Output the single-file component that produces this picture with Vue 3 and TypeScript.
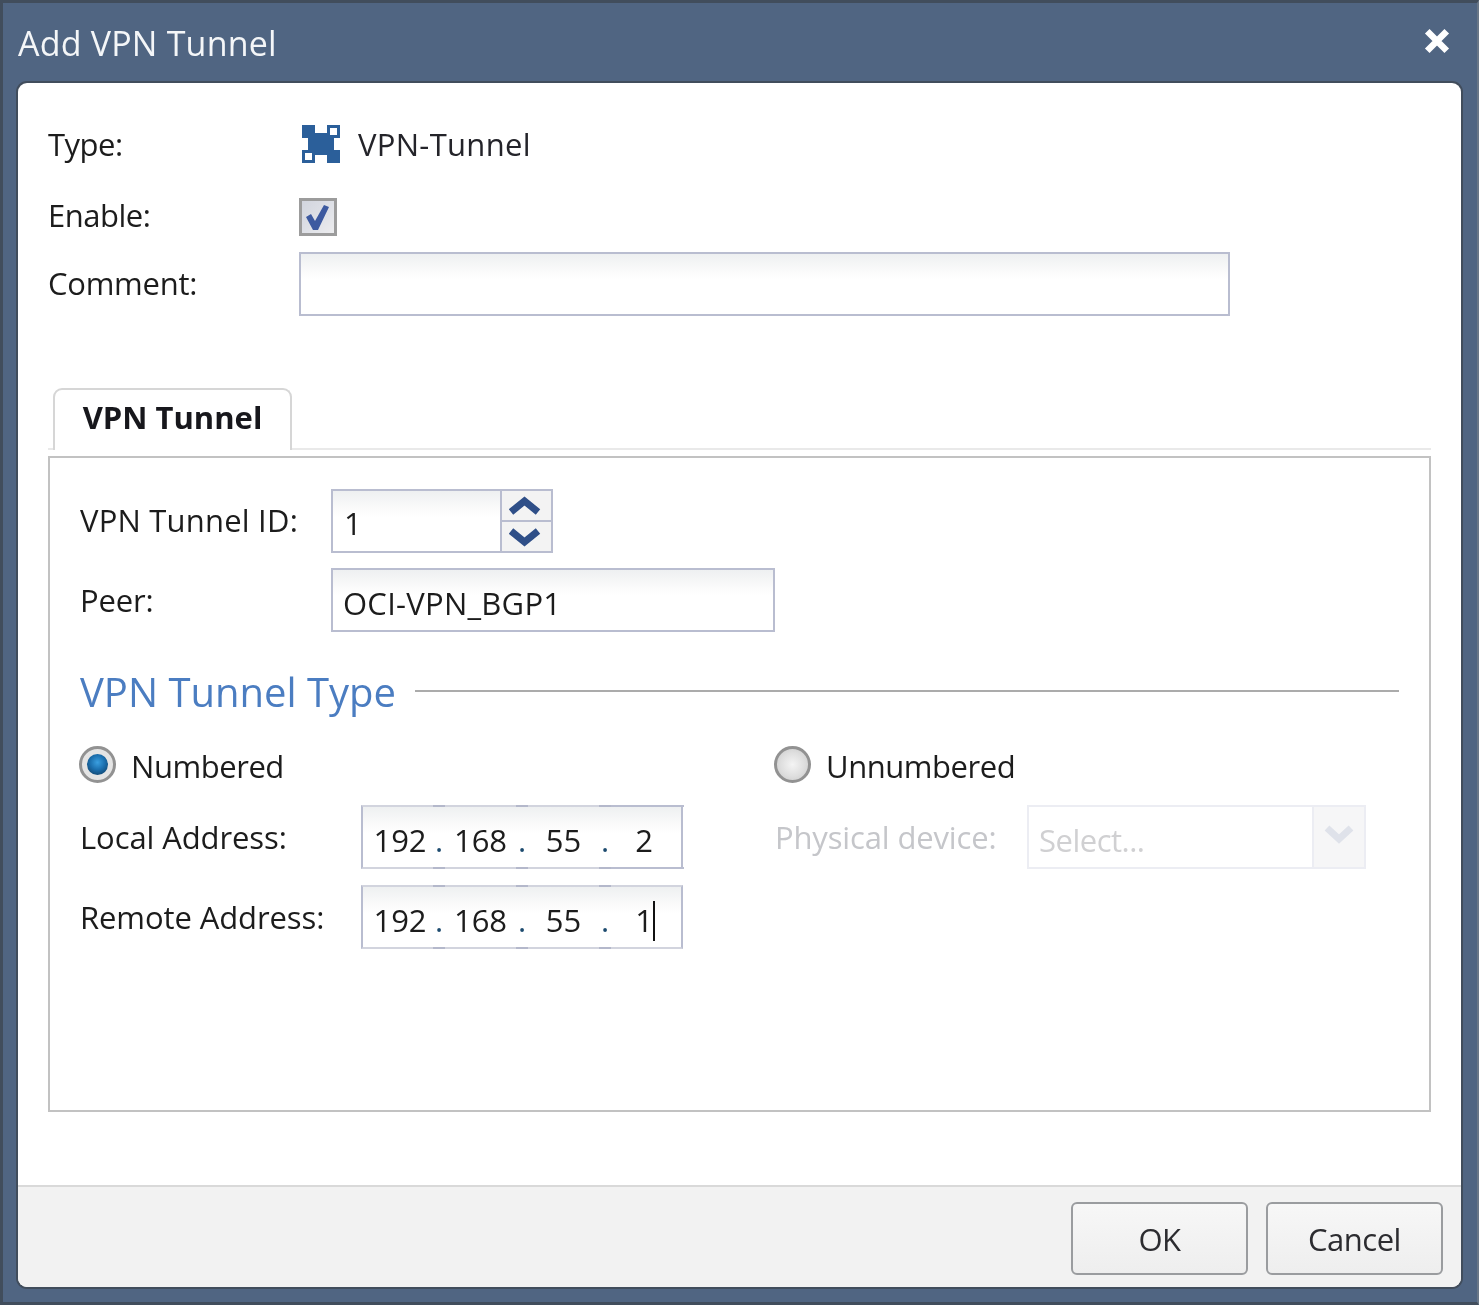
<script setup lang="ts">
const addresses: { label: string; octets: string[]; caret: boolean; active: boolean }[] = [
  { label: 'Local Address:', octets: ['192', '168', '55', '2'], caret: false, active: true },
  { label: 'Remote Address:', octets: ['192', '168', '55', '1'], caret: true, active: false },
]
</script>

<template>
  <div class="window">
    <header class="titlebar">
      <span class="title">Add VPN Tunnel</span>
      <svg class="close" viewBox="0 0 24 24" aria-hidden="true">
        <path d="M3 3 21 21M21 3 3 21" stroke="#fff" stroke-width="6" fill="none" />
      </svg>
    </header>

    <main class="panel">
      <section class="body">
        <div class="row type-row">
          <span class="label top-label">Type:</span>
          <svg class="vpn-icon" viewBox="0 0 40 40" aria-hidden="true">
            <path fill="#2b5f9a" d="M1 1h13v8h12v-8h13v13h-6v12h6v13h-13v-8h-12v8h-13v-13h6v-12h-6z" />
            <rect x="29" y="4" width="7" height="7" fill="#fff" />
            <rect x="4" y="29" width="7" height="7" fill="#fff" />
          </svg>
          <span class="type-name">VPN-Tunnel</span>
        </div>
        <div class="row enable-row">
          <span class="label top-label">Enable:</span>
          <span class="checkbox">
            <svg viewBox="0 0 32 32" aria-hidden="true">
              <path fill="#3d5aa0" d="M4 16l5-3 4 7 9-16 5 2-11 23h-5z" />
            </svg>
          </span>
        </div>
        <div class="row comment-row">
          <span class="label top-label comment-label">Comment:</span>
          <div class="input comment-input"></div>
        </div>

        <div class="tabstrip">
          <div class="tab">VPN Tunnel</div>
        </div>
        <div class="tabbox">
          <div class="row id-row">
            <span class="label box-label id-label">VPN Tunnel ID:</span>
            <div class="input spinner">
              <span class="spin-value">1</span>
              <div class="spin-buttons">
                <span class="spin-btn">
                  <svg viewBox="0 0 32 20" aria-hidden="true"><path d="M2 16 15.500 5 29 16" stroke="#2f4f88" stroke-width="7" fill="none" /></svg>
                </span>
                <span class="spin-btn">
                  <svg viewBox="0 0 32 20" aria-hidden="true"><path d="M2 4l13.500 11L29 4" stroke="#2f4f88" stroke-width="7" fill="none" /></svg>
                </span>
              </div>
            </div>
          </div>
          <div class="row peer-row">
            <span class="label box-label">Peer:</span>
            <div class="input peer-input">OCI-VPN_BGP1</div>
          </div>

          <div class="section-head">
            <span class="section-title">VPN Tunnel Type</span>
            <span class="section-line"></span>
          </div>

          <div class="columns">
            <div class="col-left">
              <div class="radio-row">
                <span class="radio radio-on"><span class="radio-dot"></span></span>
                <span class="label radio-label">Numbered</span>
              </div>
              <div v-for="(a, i) in addresses" :key="a.label" class="row addr-row" :class="{ first: i === 0 }">
                <span class="label addr-label">{{ a.label }}</span>
                <div class="input ip-input">
                  <template v-for="(o, n) in a.octets" :key="n">
                    <span class="octet" :class="['octet-' + n, { 'octet-active': a.active && n === 3 }]">{{ o }}<i v-if="a.caret && n === 3" class="caret"></i></span>
                    <span v-if="n < 3" class="dot">.</span>
                  </template>
                </div>
              </div>
            </div>
            <div class="col-right">
              <div class="radio-row">
                <span class="radio"></span>
                <span class="label radio-label">Unnumbered</span>
              </div>
              <div class="row physical-row">
                <span class="label disabled phys-label">Physical device:</span>
                <div class="select">
                  <span class="select-text">Select...</span>
                  <span class="select-arrow">
                    <svg viewBox="0 0 32 20" aria-hidden="true"><path d="M4 4l12 11L28 4" stroke="#dfe2ea" stroke-width="7" fill="none" /></svg>
                  </span>
                </div>
              </div>
            </div>
          </div>
        </div>
      </section>

      <footer class="footer">
        <button class="btn" type="button">OK</button>
        <button class="btn" type="button">Cancel</button>
      </footer>
    </main>
  </div>
</template>

<style>
html, body { margin: 0; background: #506582; }
</style>

<style scoped>
* { box-sizing: border-box; }
.window {
  width: 1479px;
  height: 1305px;
  display: flex;
  flex-direction: column;
  background: #506582;
  border-top: 3px solid #414d5c;
  border-left: 3px solid #414d5c;
  border-bottom: 3px solid #414d5c;
  border-right: 2px solid #6a7787;
  padding: 0 16px 15px 15px;
  font-family: "Open Sans", "Noto Sans", sans-serif;
  font-size: 31px;
  color: #1c1c1c;
  filter: blur(0.7px);
}
.titlebar {
  height: 78px;
  flex: none;
  display: flex;
  align-items: center;
  justify-content: space-between;
}
.title { color: #f4f6f8; font-size: 34px; letter-spacing: 0.2px; margin-top: 2px; }
.close { width: 26px; height: 26px; margin-right: 11px; margin-top: -3px; }
.panel {
  flex: 1;
  display: flex;
  flex-direction: column;
  background: #fff;
  border-radius: 9px;
  box-shadow: 0 0 0 2px #414d5c;
  margin-top: 2px;
  overflow: hidden;
}
.body { flex: 1; padding: 0 30px; }
.row { display: flex; align-items: center; }
.label { white-space: nowrap; letter-spacing: -0.15px; }
.top-label { width: 251px; flex: none; letter-spacing: -0.5px; }
.comment-label { letter-spacing: -0.25px; padding-bottom: 2px; }
.type-row { margin-top: 41px; height: 40px; }
.vpn-icon { width: 40px; height: 40px; margin-left: 2px; flex: none; }
.type-name { margin-left: 17px; letter-spacing: 0.3px; color: #24242a; }
.enable-row { margin-top: 34px; height: 38px; }
.enable-row .label { padding-bottom: 4px; }
.checkbox {
  width: 38px;
  height: 38px;
  border: 3px solid #9c9c9c;
  background: linear-gradient(135deg, #d2d5de 0%, #dfe1e7 55%, #ececee 100%);
  display: block;
}
.checkbox svg { display: block; width: 32px; height: 32px; }
.comment-row { margin-top: 16px; height: 64px; }
.input {
  height: 64px;
  border: 2px solid #b9bdd0;
  background: linear-gradient(#eef0f1 0, #fbfbfb 18px, #fff 26px);
}
.comment-input { width: 931px; }

.tabstrip {
  margin-top: 72px;
  height: 62px;
  padding-left: 5px;
  border-bottom: 2px solid #e9e9e9;
}
.tab {
  width: 239px;
  height: 62px;
  background: #fff;
  border: 2px solid #d6d6d6;
  border-bottom: 0;
  border-radius: 9px 9px 0 0;
  font-weight: 700;
  font-size: 31px;
  letter-spacing: 0;
  text-align: center;
  line-height: 54px;
  color: #17171c;
}
.tabbox {
  margin-top: 6px;
  height: 656px;
  border: 2px solid #c2c2c2;
  padding: 0 30px;
}
.box-label { width: 251px; flex: none; }
.id-label { letter-spacing: 0.2px; padding-bottom: 2px; }
.id-row { margin-top: 31px; height: 64px; }
.spinner { width: 222px; display: flex; }
.spin-value { flex: 1; padding-left: 11px; line-height: 64px; }
.spin-buttons { width: 51px; border-left: 2px solid #b9bdd0; display: flex; flex-direction: column; }
.spin-btn { flex: 1; background: #f3f3f3; display: flex; align-items: center; justify-content: center; padding-right: 3px; }
.spin-btn + .spin-btn { border-top: 2px solid #b9bdd0; }
.spin-btn svg { width: 32px; height: 20px; }
.peer-row { margin-top: 15px; height: 64px; }
.peer-input { width: 444px; padding-left: 10px; line-height: 66px; letter-spacing: 0.25px; }

.section-head { margin-top: 36px; height: 50px; display: flex; align-items: center; }
.section-title { color: #4b7dc1; font-size: 40px; white-space: nowrap; padding-bottom: 4px; }
.section-line { flex: 1; height: 2px; background: #ababab; margin-left: 19px; margin-top: -4px; }

.columns { display: flex; margin-top: 28px; }
.col-left { width: 695px; flex: none; }
.col-right { flex: 1; }
.radio-row { display: flex; align-items: center; height: 37px; gap: 15px; margin-left: -1px; }
.radio-label { letter-spacing: -0.45px; padding-top: 2px; }
.radio {
  width: 37px;
  height: 37px;
  flex: none;
  border-radius: 50%;
  border: 3px solid #929292;
  background: radial-gradient(circle, #f4f4f4 0, #dedede 55%, #c6c6c6 100%);
  display: flex;
  align-items: center;
  justify-content: center;
}
.radio-on { background: #e4e4e4; }
.radio-dot {
  width: 21px;
  height: 21px;
  border-radius: 50%;
  background: radial-gradient(circle at 50% 40%, #3a9fe0 0, #1b6fae 45%, #0f3454 100%);
}
.addr-row { margin-top: 16px; height: 64px; }
.addr-row.first { margin-top: 22px; }
.addr-label { width: 281px; flex: none; letter-spacing: -0.1px; }
.ip-input {
  width: 322px;
  display: flex;
  padding-left: 4px;
  line-height: 66px;
  border-top-color: #d2d4de;
  border-bottom-color: #d2d4de;
}
.octet { text-align: center; flex: none; position: relative; }
.octet-0 { width: 66px; }
.octet-1 { width: 71px; }
.octet-2 { width: 71px; }
.octet-3 { width: 66px; }
.octet-active::before, .octet-active::after {
  content: "";
  position: absolute;
  left: 0;
  right: -7px;
  height: 2px;
  background: #b9bdd0;
}
.octet-active::before { top: -2px; }
.octet-active::after { bottom: -2px; }
.dot { width: 12px; text-align: center; flex: none; position: relative; color: #1c4a6e; }
.dot::before, .dot::after {
  content: "";
  position: absolute;
  left: 0;
  width: 12px;
  height: 2px;
  background: #b4b8cb;
}
.dot::before { top: -2px; }
.dot::after { bottom: -2px; }
.caret {
  position: absolute;
  right: 22px;
  top: 14px;
  width: 2px;
  height: 40px;
  background: #111;
}
.physical-row { margin-top: 22px; height: 64px; }
.phys-label { width: 252px; flex: none; }
.disabled { color: #c5c6ca; }
.select {
  width: 339px;
  height: 64px;
  border: 2px solid #ecedf3;
  display: flex;
  background: #fff;
}
.select-text { flex: 1; color: #d0d0d2; padding-left: 10px; line-height: 66px; letter-spacing: -0.5px; }
.select-arrow { width: 52px; background: #f6f6f7; border-left: 2px solid #ecedf3; display: flex; justify-content: center; padding-top: 17px; }
.select-arrow svg { width: 32px; height: 20px; }

.footer {
  height: 102px;
  flex: none;
  background: #f2f2f2;
  border-top: 2px solid #d9d9d9;
  display: flex;
  justify-content: flex-end;
  gap: 18px;
  padding: 15px 18px 0 0;
}
.btn {
  width: 177px;
  height: 73px;
  border: 2px solid #9a9c9f;
  border-radius: 6px;
  background: linear-gradient(#f7f7f7, #eeeeee);
  font: inherit;
  color: #2c2c30;
  letter-spacing: -0.5px;
  padding: 0;
}
</style>
